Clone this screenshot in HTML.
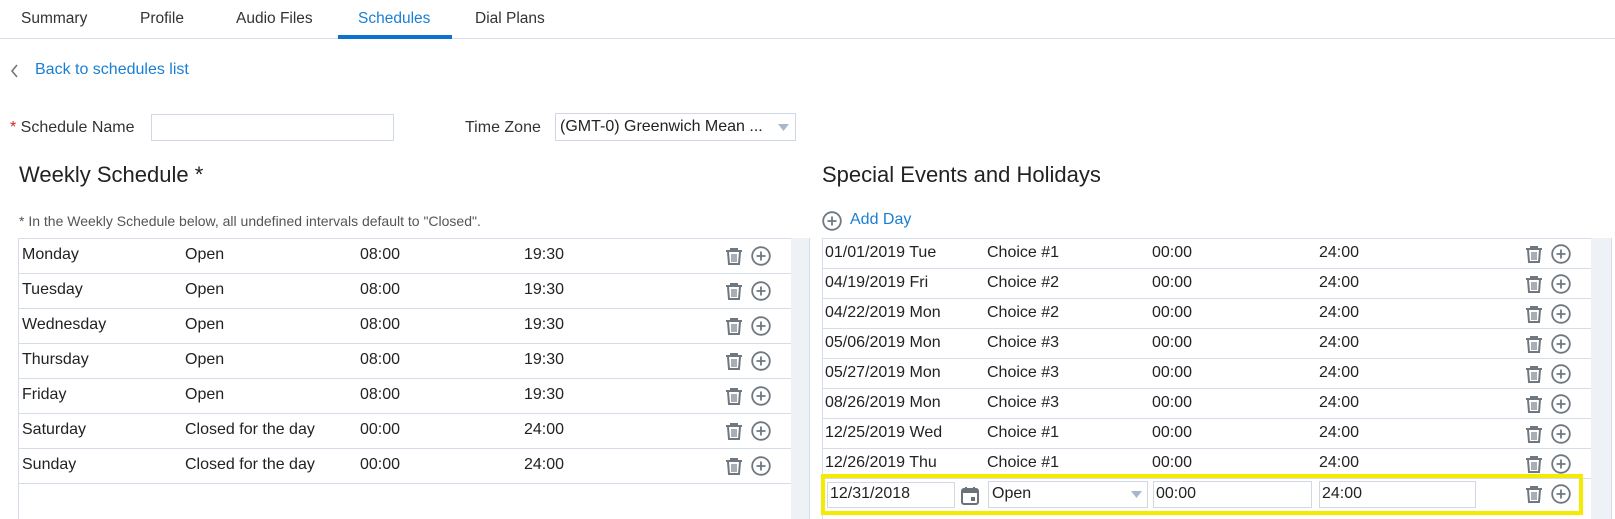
<!DOCTYPE html>
<html><head><meta charset="utf-8"><style>
*{box-sizing:border-box;margin:0;padding:0}
body{width:1615px;height:519px;overflow:hidden;background:#fff;font-family:"Liberation Sans","DejaVu Sans",sans-serif;color:#333;position:relative}
.a{position:absolute;white-space:nowrap}
.tab{font-size:15.5px;top:10px;color:#333}
.blue{color:#1a7fd4}
.inp{position:absolute;border:1px solid #cfd8e3;background:#fff}
.hl{position:absolute;height:1px;background:#d5dde8}
.vl{position:absolute;width:1px;background:#d5dde8}
.cell{position:absolute;font-size:16px;color:#222;white-space:nowrap}
</style></head><body>
<div class="a tab" style="left:21px">Summary</div>
<div class="a tab" style="left:140px">Profile</div>
<div class="a tab" style="left:236px">Audio Files</div>
<div class="a tab blue" style="left:358px">Schedules</div>
<div class="a tab" style="left:475px">Dial Plans</div>
<div class="hl" style="left:0;top:38px;width:1615px"></div>
<div style="position:absolute;left:338px;top:35px;width:114px;height:4px;background:#0b72cf"></div>

<svg class="a" style="left:10px;top:63px" width="10" height="16"><path d="M7 2 L2 8 L7 14" fill="none" stroke="#777" stroke-width="1.6"/></svg>
<div class="a blue" style="left:35px;top:61px;font-size:16px">Back to schedules list</div>

<div class="a" style="left:10px;top:119px;font-size:16px"><span style="color:#e02020">*</span> Schedule Name</div>
<div class="inp" style="left:151px;top:114px;width:243px;height:27px"></div>
<div class="a" style="left:465px;top:119px;font-size:16px">Time Zone</div>
<div class="inp" style="left:555px;top:113px;width:241px;height:28px"></div>
<div class="a" style="left:560px;top:118px;font-size:16px;color:#222">(GMT-0) Greenwich Mean ...</div>
<svg class="a" style="left:778px;top:124px" width="11" height="8"><path d="M0 0 L11 0 L5.5 7Z" fill="#a9b8c8"/></svg>

<div class="a" style="left:19px;top:162px;font-size:22px;color:#222">Weekly Schedule *</div>
<div class="a" style="left:822px;top:162px;font-size:22px;color:#222">Special Events and Holidays</div>
<div class="a" style="left:19px;top:213px;font-size:14px;color:#555">* In the Weekly Schedule below, all undefined intervals default to "Closed".</div>
<svg class="a" style="left:822px;top:211px" width="20" height="20"><circle cx="10" cy="10" r="8.8" fill="none" stroke="#707880" stroke-width="1.8"/><path d="M10 5.5V14.5M5.5 10H14.5" stroke="#707880" stroke-width="1.8"/></svg>
<div class="a blue" style="left:850px;top:211px;font-size:16px">Add Day</div>

<div style="position:absolute;left:791px;top:238px;width:19px;height:281px;background:#eef2f7"></div>
<div class="vl" style="left:18px;top:238px;height:281px"></div>
<div class="vl" style="left:809px;top:238px;height:281px"></div>
<div id="lt"></div>
<div style="position:absolute;left:1591px;top:238px;width:21px;height:281px;background:#eef2f7"></div>
<div class="vl" style="left:822px;top:238px;height:281px"></div>
<div class="vl" style="left:1611px;top:238px;height:281px"></div>
<div id="rt"></div>

<div style="position:absolute;left:821px;top:474px;width:762px;height:41px;border:4px solid #f5eb00"></div>
<div class="inp" style="left:827px;top:482px;width:128px;height:26px"></div>
<div class="cell" style="left:830px;top:485px">12/31/2018</div>
<svg class="a" style="left:960px;top:486px" width="20" height="20"><rect x="2" y="3" width="16" height="15" rx="2" fill="none" stroke="#6a727a" stroke-width="2"/><rect x="2" y="3" width="16" height="4" fill="#6a727a"/><path d="M6 1V4M14 1V4" stroke="#6a727a" stroke-width="2"/><rect x="11" y="11" width="4" height="4" fill="#6a727a"/></svg>
<div class="inp" style="left:988px;top:481px;width:160px;height:27px"></div>
<div class="cell" style="left:992px;top:485px">Open</div>
<svg class="a" style="left:1131px;top:491px" width="11" height="8"><path d="M0 0 L11 0 L5.5 7Z" fill="#a9b8c8"/></svg>
<div class="inp" style="left:1153px;top:481px;width:159px;height:27px"></div>
<div class="cell" style="left:1156px;top:485px">00:00</div>
<div class="inp" style="left:1319px;top:481px;width:157px;height:27px"></div>
<div class="cell" style="left:1322px;top:485px">24:00</div>

<script>
function icons(x,cy){
return '<svg class="a" style="left:'+x+'px;top:'+(cy-10)+'px" width="50" height="20"><path d="M1 5H17M6 5V3H12V5M3 6L4 18H14L15 6" fill="none" stroke="#6f7880" stroke-width="2"/><path d="M7 8V16M9 8V16M11 8V16" stroke="#6f7880" stroke-width="1.2"/><circle cx="36" cy="10" r="8.8" fill="none" stroke="#6f7880" stroke-width="1.8"/><path d="M36 5.5V14.5M31.5 10H40.5" stroke="#6f7880" stroke-width="1.8"/></svg>';
}
var L=[["Monday","Open","08:00","19:30"],["Tuesday","Open","08:00","19:30"],["Wednesday","Open","08:00","19:30"],["Thursday","Open","08:00","19:30"],["Friday","Open","08:00","19:30"],["Saturday","Closed for the day","00:00","24:00"],["Sunday","Closed for the day","00:00","24:00"]];
var h='';
for(var i=0;i<=7;i++){h+='<div class="hl" style="left:18px;top:'+(238+i*35)+'px;width:773px"></div>';}
L.forEach(function(r,i){var t=238+i*35;var xs=[22,185,360,524];r.forEach(function(c,j){h+='<div class="cell" style="left:'+xs[j]+'px;top:'+(t+8)+'px">'+c+'</div>';});h+=icons(725,t+18);});
document.getElementById('lt').innerHTML=h;
var R=[["01/01/2019 Tue","Choice #1"],["04/19/2019 Fri","Choice #2"],["04/22/2019 Mon","Choice #2"],["05/06/2019 Mon","Choice #3"],["05/27/2019 Mon","Choice #3"],["08/26/2019 Mon","Choice #3"],["12/25/2019 Wed","Choice #1"],["12/26/2019 Thu","Choice #1"]];
h='';
for(var i=0;i<=8;i++){h+='<div class="hl" style="left:822px;top:'+(238+i*30)+'px;width:769px"></div>';}
R.forEach(function(r,i){var t=238+i*30;var c=[r[0],r[1],"00:00","24:00"],xs=[825,987,1152,1319];c.forEach(function(s,j){h+='<div class="cell" style="left:'+xs[j]+'px;top:'+(t+6)+'px">'+s+'</div>';});h+=icons(1525,t+16);});
h+=icons(1525,494);
document.getElementById('rt').innerHTML=h;
</script>
</body></html>
